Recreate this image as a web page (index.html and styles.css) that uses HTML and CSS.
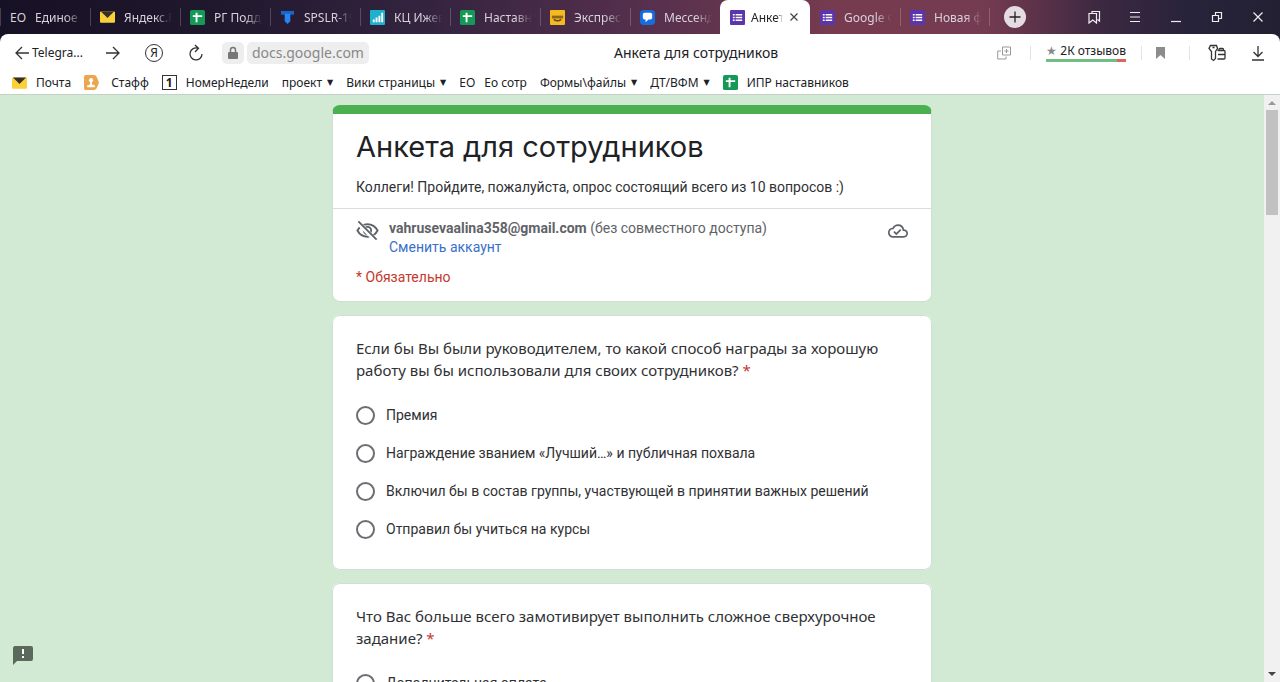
FILE: index.html
```html
<!DOCTYPE html>
<html lang="ru">
<head>
<meta charset="utf-8">
<title>Анкета для сотрудников</title>
<link rel="stylesheet" href="styles.css">
</head>
<body>
<svg class="defs" aria-hidden="true">
  <symbol id="mail" viewBox="0 0 16 12"><rect width="16" height="12" rx="1" fill="#fcd137"/><path d="M1 0h14L8 7z" fill="#33302c"/></symbol>
  <symbol id="sheet" viewBox="0 0 16 16"><rect width="16" height="16" rx="2" fill="#159957"/><path d="M7 3v10M3 6.500h10" stroke="#fff" stroke-width="2" fill="none"/></symbol>
  <symbol id="form" viewBox="0 0 16 16"><rect width="16" height="16" rx="1" fill="#5a35ab"/><path d="M6 5h7M6 8h7M6 11h7M3 5h2M3 8h2M3 11h2" stroke="#fff" stroke-width="1.700"/></symbol>
</svg>
<header class="browser">
  <nav class="tabs" aria-label="Вкладки">
    <a class="tab" href="#"><span class="letters">EO</span><span class="tab-name">Единое окно</span></a>
    <a class="tab" href="#"><svg class="icon wide"><use href="#mail"/></svg><span class="tab-name">Яндекс.Почта</span></a>
    <a class="tab" href="#"><svg class="icon"><use href="#sheet"/></svg><span class="tab-name">РГ Поддержка</span></a>
    <a class="tab" href="#"><svg class="icon" viewBox="0 0 16 16"><path d="M1 1h14v4H1z" fill="#1667c9"/><path d="M5 4h6v8l-3 3-3-3z" fill="#2684f5"/></svg><span class="tab-name">SPSLR-1900</span></a>
    <a class="tab" href="#"><svg class="icon" viewBox="0 0 16 16"><rect width="16" height="16" rx="1" fill="#1fb0cd"/><path d="M4 13v-3M7 13V8M10 13V6M13 13V3" stroke="#fff" stroke-width="2"/></svg><span class="tab-name">КЦ Ижевск</span></a>
    <a class="tab" href="#"><svg class="icon"><use href="#sheet"/></svg><span class="tab-name">Наставники</span></a>
    <a class="tab" href="#"><svg class="icon" viewBox="0 0 16 16"><rect width="16" height="16" rx="1" fill="#f5b921"/><path d="M2 6h12v3H2z" fill="#8d661b"/><path d="M4 10q4 3 8 0" stroke="#5e4716" stroke-width="1.500" fill="none"/></svg><span class="tab-name">Экспресс</span></a>
    <a class="tab" href="#"><svg class="icon" viewBox="0 0 16 16"><rect width="16" height="16" rx="4" fill="#176de0"/><path d="M5 3h6q2 0 2 2v3q0 2-2 2H9l-3 3v-3H5q-2 0-2-2V5q0-2 2-2z" fill="#fff"/></svg><span class="tab-name">Мессенджер</span></a>
    <a class="tab active" href="#"><svg class="icon"><use href="#form"/></svg><span class="tab-name">Анкета</span><svg class="close" viewBox="0 0 10 10"><path d="M1.500 1.500l7 7M8.500 1.500l-7 7" stroke="#444" stroke-width="1.200"/></svg></a>
    <a class="tab" href="#"><svg class="icon"><use href="#form"/></svg><span class="tab-name">Google Формы</span></a>
    <a class="tab last" href="#"><svg class="icon"><use href="#form"/></svg><span class="tab-name">Новая форма</span></a>
    <button class="new-tab" aria-label="Новая вкладка"><svg viewBox="0 0 22 22"><circle cx="11" cy="11" r="11" fill="#e4dce2"/><path d="M5.500 11h11M11 5.500v11" stroke="#222" stroke-width="1.300"/></svg></button>
    <div class="window-controls">
      <button aria-label="Закладки"><svg viewBox="0 0 14 14"><path d="M5 3.500V1.500h7.500v9.500l-2-1.500M2 3.500h7.500v9.500l-3.700-3L2 13z"/></svg></button>
      <button aria-label="Меню"><svg viewBox="0 0 14 14"><path d="M2 2.500h10M2 7h10M2 11.500h10"/></svg></button>
      <button aria-label="Свернуть"><svg viewBox="0 0 14 14"><path d="M2 11.500h10"/></svg></button>
      <button aria-label="Восстановить"><svg viewBox="0 0 14 14"><path d="M2.500 5.500h6v6h-6zM5.500 5.500v-3h6v6h-3"/></svg></button>
      <button aria-label="Закрыть"><svg viewBox="0 0 14 14"><path d="M2.500 2.500l9 9M11.500 2.500l-9 9"/></svg></button>
    </div>
  </nav>
  <div class="toolbar">
    <button class="back"><svg viewBox="0 0 14 14"><path d="M14 7H1M7 1L1 7l6 6"/></svg>Telegra...</button>
    <button class="forward" aria-label="Вперёд"><svg viewBox="0 0 14 14"><path d="M0 7h13M7 1l6 6-6 6"/></svg></button>
    <button class="home" aria-label="Яндекс">Я</button>
    <button class="reload" aria-label="Обновить"><svg viewBox="0 0 16 18"><path d="M14 10a6 6 0 1 1-4-5.700M7 1l3.500 3.300L7 8"/></svg></button>
    <div class="address">
      <button class="lock" aria-label="Сведения о сайте"><svg viewBox="0 0 12 14"><path d="M3.500 6V4a2.500 2.500 0 0 1 5 0v2" fill="none" stroke="#777" stroke-width="1.500"/><rect x="1" y="6" width="10" height="7" rx="1" fill="#777" stroke="none"/></svg></button>
      <a class="host" href="#">docs.google.com</a>
    </div>
    <div class="page-title">Анкета для сотрудников</div>
    <div class="tools">
      <button class="copy" aria-label="Копировать"><svg viewBox="0 0 14 14"><path d="M5.500 1h8v8h-8zM9.500 3v4M7.500 5h4M4 5H.7v8H9v-2.500" stroke="#999"/></svg></button>
      <a class="reviews" href="#"><span class="star">★</span> 2К отзывов</a>
      <button class="save" aria-label="В закладки"><svg viewBox="0 0 11 14"><path d="M1 1h9v12l-4.500-4L1 13z" fill="#8c8c8c" stroke="none"/></svg></button>
      <button class="keys" aria-label="Пароли"><svg viewBox="0 0 18 18"><path d="M2.500 1.500h6l1 3-2 3v7l-2 2-2-1.500V7.500L1 4.500zM4.500 3.500h2M11 6.500V5.500q0-1 1-1h2.500q1 0 1 1v1M9.500 6.500H16q1 0 1 1V14q0 1-1 1H9.500M10 10.500h7"/></svg></button>
      <button class="download" aria-label="Загрузки"><svg viewBox="0 0 14 16"><path d="M7 1v10M2.500 7L7 11.500 11.500 7M1 15h12"/></svg></button>
    </div>
  </div>
  <nav class="bookmarks" aria-label="Панель закладок">
    <a href="#"><svg class="icon wide"><use href="#mail"/></svg>Почта</a>
    <a class="wide-gap" href="#"><svg class="icon" viewBox="0 0 16 16"><path d="M2 0h9q2 0 3 3l2 5-2 5q-1 3-3 3H2q-2 0-2-2V2q0-2 2-2z" fill="#eda64d"/><circle cx="7.500" cy="5.500" r="2.200" fill="#fff"/><path d="M6.500 7h2v3l3 1v2h-8v-2l3-1z" fill="#fff"/></svg>Стафф</a>
    <a href="#"><span class="number">1</span>НомерНедели</a>
    <a href="#">проект <span class="arrow">▼</span></a>
    <a href="#">Вики страницы <span class="arrow">▼</span></a>
    <a href="#"><span class="letters">EO</span>Ео сотр</a>
    <a href="#">Формы\файлы <span class="arrow">▼</span></a>
    <a href="#">ДТ/ВФМ <span class="arrow">▼</span></a>
    <a href="#"><svg class="icon"><use href="#sheet"/></svg>ИПР наставников</a>
  </nav>
</header>
<div class="viewport">
  <main class="page">
    <form class="form">
      <section class="card intro">
        <div class="heading">
          <h1>Анкета для сотрудников</h1>
          <p>Коллеги! Пройдите, пожалуйста, опрос состоящий всего из 10 вопросов :)</p>
        </div>
        <div class="account">
          <svg class="eye" viewBox="0 0 24 24"><path d="M1.500 12Q5 5.500 12 5.500T22.500 12Q19 18.500 12 18.500T1.500 12z"/><circle cx="12" cy="12" r="3.800"/><path d="M2 3.500L20.500 22" stroke="#fff" stroke-width="5"/><path d="M2.500 2.500L21.500 21.500"/></svg>
          <div class="who"><div><strong>vahrusevaalina358@gmail.com</strong> (без совместного доступа)</div><a href="#">Сменить аккаунт</a></div>
          <svg class="cloud" viewBox="0 0 24 24"><path d="M19.350 10.040A7.490 7.490 0 0 0 12 4C9.110 4 6.600 5.640 5.350 8.040A5.994 5.994 0 0 0 0 14c0 3.310 2.690 6 6 6h13c2.760 0 5-2.240 5-5 0-2.640-2.050-4.780-4.650-4.960zM19 18H6c-2.210 0-4-1.790-4-4 0-2.050 1.530-3.760 3.560-3.970l1.070-.11.5-.95A5.469 5.469 0 0 1 12 6c2.620 0 4.880 1.860 5.390 4.430l.3 1.500 1.530.11A2.980 2.980 0 0 1 22 15c0 1.650-1.350 3-3 3zm-9-3.820l-2.090-2.090L6.500 13.500 10 17l6.010-6.010-1.410-1.410z"/></svg>
        </div>
        <p class="required-note">* Обязательно</p>
      </section>
      <fieldset class="card question">
        <legend>Если бы Вы были руководителем, то какой способ награды за хорошую работу вы бы использовали для своих сотрудников? <span class="mark">*</span></legend>
        <div class="options">
          <label><input type="radio" name="reward">Премия</label>
          <label><input type="radio" name="reward">Награждение званием «Лучший…» и публичная похвала</label>
          <label><input type="radio" name="reward">Включил бы в состав группы, участвующей в принятии важных решений</label>
          <label><input type="radio" name="reward">Отправил бы учиться на курсы</label>
        </div>
      </fieldset>
      <fieldset class="card question">
        <legend>Что Вас больше всего замотивирует выполнить сложное сверхурочное задание? <span class="mark">*</span></legend>
        <div class="options">
          <label><input type="radio" name="overtime">Дополнительная оплата</label>
        </div>
      </fieldset>
    </form>
    <button class="feedback" aria-label="Сообщить о проблеме"><svg viewBox="0 0 20 20"><path d="M2 0h16q2 0 2 2v11q0 2-2 2H4l-4 4V2q0-2 2-2z" fill="#5b695d"/><path d="M10 3v5M10 10v2" stroke="#fff" stroke-width="2"/></svg></button>
  </main>
  <div class="scrollbar" aria-hidden="true"><span class="up"></span><span class="thumb"></span><span class="down"></span></div>
</div>
</body>
</html>
```

FILE: styles.css
```css
* { box-sizing: border-box; }
body {
  margin: 0;
  height: 100vh;
  display: flex;
  flex-direction: column;
  overflow: hidden;
  font-family: "Noto Sans", "Open Sans", sans-serif;
  font-size: 12px;
  color: #202124;
}
button { border: 0; padding: 0; background: none; font: inherit; color: inherit; display: flex; align-items: center; justify-content: center; }
a { color: inherit; text-decoration: none; }
svg { display: block; flex: none; }
p, h1 { margin: 0; }
.defs { position: absolute; width: 0; height: 0; }
.icon { width: 15px; height: 15px; }
.icon.wide { height: 12px; }

/* Browser window */
.browser { background: linear-gradient(90deg, #171126 0, #20182d 17%, #352440 34%, #59314e 52%, #763b4f 65%, #753b50 77%, #3c2841 86%, #27233a 93%, #232033 100%) 0 0 / 100% 50px no-repeat; }
.tabs { display: flex; height: 34px; align-items: stretch; }
.tab {
  flex: 0 1 90px;
  min-width: 0;
  display: flex;
  align-items: center;
  gap: 9px;
  padding: 0 8px 0 10px;
  color: #d8d2da;
  position: relative;
}
.tab::before { content: ""; position: absolute; left: 0; top: 8px; height: 18px; width: 1px; background: rgba(255, 255, 255, .2); }
.tab.last::after { content: ""; position: absolute; right: 0; top: 8px; height: 18px; width: 1px; background: rgba(255, 255, 255, .2); }
.tab-name { flex: 1; min-width: 0; overflow: hidden; white-space: nowrap; -webkit-mask-image: linear-gradient(90deg, #000 65%, transparent); mask-image: linear-gradient(90deg, #000 65%, transparent); }
.tab.active { background: #fff; color: #222; border-radius: 8px 8px 0 0; gap: 6px; padding-right: 11px; }
.tab.active .tab-name { -webkit-mask-image: linear-gradient(90deg, #000 80%, transparent); mask-image: linear-gradient(90deg, #000 80%, transparent); }
.tab.active::before, .tab.active + .tab::before { display: none; }
.close { width: 10px; height: 10px; }
.new-tab { margin-left: 14px; width: 22px; }
.new-tab svg { width: 22px; height: 22px; }
.window-controls { margin-left: auto; display: flex; gap: 27px; padding-right: 15px; }
.window-controls svg { width: 14px; height: 14px; fill: none; stroke: #eee; stroke-width: 1.2; }

.toolbar { display: flex; align-items: center; height: 37px; padding: 0 15px; background: #fff; border-radius: 8px 8px 0 0; }
.toolbar svg { fill: none; stroke: #333; stroke-width: 1.3; }
.back { gap: 3px; width: 64px; justify-content: flex-start; }
.back svg, .forward svg { width: 14px; height: 14px; }
.forward { margin-left: 27px; }
.home { margin-left: 25px; width: 18px; height: 18px; border: 1px solid #333; border-radius: 50%; }
.reload { margin-left: 25px; }
.reload svg { width: 16px; height: 18px; }
.address { display: flex; gap: 3px; margin-left: 18px; color: #888; font-size: 14px; line-height: 22px; }
.lock, .host { background: #eee; border-radius: 5px; }
.lock { width: 22px; }
.lock svg { width: 12px; height: 14px; }
.host { padding: 0 5px; }
.page-title { flex: 1; text-align: center; font-size: 14px; padding-left: 26px; white-space: nowrap; }
.tools { display: flex; align-items: center; }
.copy svg { width: 14px; height: 14px; stroke-width: 1; }
.reviews { margin: 0 15px 0 35px; border-bottom: 3px solid; border-image: linear-gradient(90deg, #72bd83 88%, #e06559 88%) 1; line-height: 16px; white-space: nowrap; position: relative; }
.reviews::before { content: ""; position: absolute; left: -16px; top: 3px; width: 1px; height: 14px; background: #e3e3e3; }
.star { color: #888; }
.save { border: solid #e3e3e3; border-width: 0 1px; padding: 0 23px 0 13px; }
.save svg { width: 11px; height: 14px; }
.keys { margin: 0 25px 0 18px; }
.keys svg { width: 18px; height: 18px; }
.download svg { width: 14px; height: 16px; }

.bookmarks { display: flex; align-items: center; gap: 13px; height: 24px; padding: 0 12px; background: #fff; border-bottom: 1px solid #c4d2c5; white-space: nowrap; }
.bookmarks a { display: flex; align-items: center; gap: 9px; }
.bookmarks .wide-gap { gap: 12px; }
.number { width: 15px; height: 15px; border: 1px solid #333; line-height: 13px; text-align: center; font-weight: 700; }
.arrow { font-family: "DejaVu Sans", sans-serif; font-size: 8px; margin-left: -4px; }

/* Form page */
.viewport { flex: 1; min-height: 0; display: flex; }
.page { flex: 1; min-width: 0; overflow: hidden; padding: 10px 16px 0; background: #d2ead3; position: relative; font-family: Roboto, sans-serif; font-size: 14px; }
.form { max-width: 600px; margin: 0 auto; display: flex; flex-direction: column; gap: 13px; }
.card { margin: 0; min-width: 0; background: #fff; border: 1px solid #d0dfd1; border-radius: 8px; }
.intro { border-top: 9px solid #4caf50; padding-bottom: 14px; overflow: hidden; }
.heading { padding: 14px 23px 11px; border-bottom: 1px solid #dadce0; }
h1 { font-family: Inter, sans-serif; font-weight: 400; font-size: 29px; line-height: 38px; }
.heading p { margin-top: 11px; line-height: 20px; color: #303134; }
.account { display: flex; align-items: flex-start; padding: 10px 23px 0; color: #5f6368; line-height: 19px; }
.eye { width: 23px; height: 23px; margin-right: 10px; fill: none; stroke: #5f6368; stroke-width: 2; }
.who { flex: 1; }
.who a { color: #3a70c8; }
.cloud { width: 20px; height: 20px; margin-top: 2px; fill: #5f6368; }
.required-note { padding: 10px 23px 0; color: #c5372c; line-height: 20px; }
.question { padding: 21px 23px 30px; }
.question legend { float: left; width: 100%; padding: 0; margin-bottom: 24px; font-family: "Noto Sans", sans-serif; font-size: 15px; line-height: 22px; color: #303134; }
.mark { color: #c5372c; }
.options { clear: both; display: flex; flex-direction: column; gap: 18px; color: #303134; }
.options label { display: flex; align-items: center; gap: 11px; height: 20px; }
.options input { appearance: none; width: 19px; height: 19px; margin: 0; border: 2px solid #6b6e72; border-radius: 50%; }
.feedback { position: absolute; left: 13px; bottom: 16px; }
.feedback svg { width: 20px; height: 20px; }

.scrollbar { width: 16px; background: #f1f1f1; display: flex; flex-direction: column; align-items: center; }
.up, .down { border: solid transparent; border-width: 0 4px; }
.up { margin: 6px 0 5px; border-bottom: 4px solid #999; }
.thumb { width: 12px; height: 105px; background: #c1c1c1; }
.down { margin: auto 0 6px; border-top: 4px solid #444; }
```
